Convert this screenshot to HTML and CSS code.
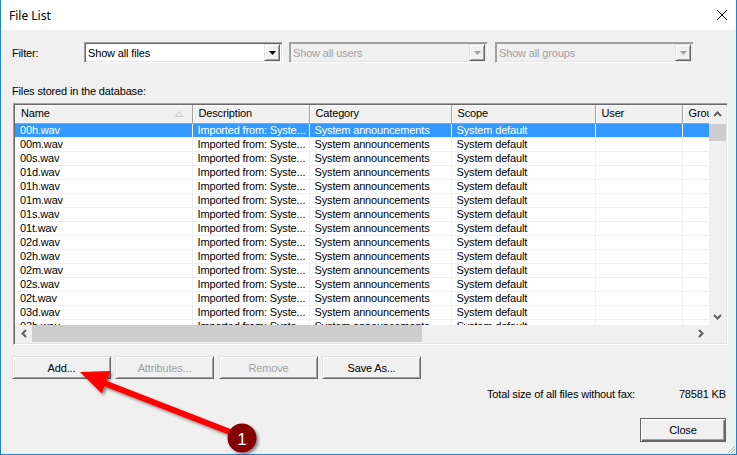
FILE: index.html
```html
<!DOCTYPE html>
<html lang="en">
<head>
    <meta charset="UTF-8">
    <title>File List</title>
    <link rel="stylesheet" href="styles.css">
</head>
<body>
<div class="window">
    <div class="titlebar">
        <span class="title">File List</span>
        <svg class="close-x" width="12" height="12" viewBox="0 0 12 12">
            <path d="M1 1 L11 11 M11 1 L1 11" stroke="#000" stroke-width="1"/>
        </svg>
    </div>

    <div class="content">
        <div class="filter-row">
            <span class="filter-label">Filter:</span>
            <div class="combo">
                <span class="combo-text">Show all files</span>
                <span class="combo-btn"><svg width="7" height="4" viewBox="0 0 7 4"><path d="M0 0 H7 L3.5 4 Z" fill="#000"/></svg></span>
            </div>
            <div class="combo disabled">
                <span class="combo-text">Show all users</span>
                <span class="combo-btn"><svg width="7" height="4" viewBox="0 0 7 4"><path d="M0 0 H7 L3.5 4 Z" fill="#a0a0a0"/></svg></span>
            </div>
            <div class="combo disabled">
                <span class="combo-text">Show all groups</span>
                <span class="combo-btn"><svg width="7" height="4" viewBox="0 0 7 4"><path d="M0 0 H7 L3.5 4 Z" fill="#a0a0a0"/></svg></span>
            </div>
        </div>

        <div class="caption">Files stored in the database:</div>

        <div class="listview">
            <div class="list-main">
                <div class="list-area">
                    <table class="files">
                        <colgroup>
                            <col style="width:177px"><col style="width:117px"><col style="width:142px">
                            <col style="width:144px"><col style="width:87px"><col style="width:27px">
                        </colgroup>
                        <thead>
                            <tr>
                                <th>Name<svg class="sort" width="8" height="6" viewBox="0 0 8 6"><path d="M0.5 5.5 L4 0.5 L7.5 5.5 Z" fill="none" stroke="#c8c8c8"/></svg></th>
                                <th>Description</th>
                                <th>Category</th>
                                <th>Scope</th>
                                <th>User</th>
                                <th>Group</th>
                            </tr>
                        </thead>
                        <tbody>
                            <tr class="selected"><td>00h.wav</td><td>Imported from: Syste...</td><td>System announcements</td><td>System default</td><td></td><td></td></tr>
                            <tr><td>00m.wav</td><td>Imported from: Syste...</td><td>System announcements</td><td>System default</td><td></td><td></td></tr>
                            <tr><td>00s.wav</td><td>Imported from: Syste...</td><td>System announcements</td><td>System default</td><td></td><td></td></tr>
                            <tr><td>01d.wav</td><td>Imported from: Syste...</td><td>System announcements</td><td>System default</td><td></td><td></td></tr>
                            <tr><td>01h.wav</td><td>Imported from: Syste...</td><td>System announcements</td><td>System default</td><td></td><td></td></tr>
                            <tr><td>01m.wav</td><td>Imported from: Syste...</td><td>System announcements</td><td>System default</td><td></td><td></td></tr>
                            <tr><td>01s.wav</td><td>Imported from: Syste...</td><td>System announcements</td><td>System default</td><td></td><td></td></tr>
                            <tr><td>01t.wav</td><td>Imported from: Syste...</td><td>System announcements</td><td>System default</td><td></td><td></td></tr>
                            <tr><td>02d.wav</td><td>Imported from: Syste...</td><td>System announcements</td><td>System default</td><td></td><td></td></tr>
                            <tr><td>02h.wav</td><td>Imported from: Syste...</td><td>System announcements</td><td>System default</td><td></td><td></td></tr>
                            <tr><td>02m.wav</td><td>Imported from: Syste...</td><td>System announcements</td><td>System default</td><td></td><td></td></tr>
                            <tr><td>02s.wav</td><td>Imported from: Syste...</td><td>System announcements</td><td>System default</td><td></td><td></td></tr>
                            <tr><td>02t.wav</td><td>Imported from: Syste...</td><td>System announcements</td><td>System default</td><td></td><td></td></tr>
                            <tr><td>03d.wav</td><td>Imported from: Syste...</td><td>System announcements</td><td>System default</td><td></td><td></td></tr>
                            <tr><td>03h.wav</td><td>Imported from: Syste...</td><td>System announcements</td><td>System default</td><td></td><td></td></tr>
                        </tbody>
                    </table>
                </div>
                <div class="vscroll">
                    <span class="sb-arrow"><svg width="9" height="6" viewBox="0 0 9 6"><path d="M1 5 L4.5 1.5 L8 5" fill="none" stroke="#606060" stroke-width="2"/></svg></span>
                    <span class="vthumb"></span>
                    <span class="sb-fill"></span>
                    <span class="sb-arrow"><svg width="9" height="6" viewBox="0 0 9 6"><path d="M1 1 L4.5 4.5 L8 1" fill="none" stroke="#606060" stroke-width="2"/></svg></span>
                </div>
            </div>
            <div class="hscroll-row">
                <div class="hscroll">
                    <span class="sb-arrow"><svg width="6" height="9" viewBox="0 0 6 9"><path d="M5 1 L1.5 4.5 L5 8" fill="none" stroke="#606060" stroke-width="2"/></svg></span>
                    <span class="hthumb"></span>
                    <span class="sb-fill"></span>
                    <span class="sb-arrow"><svg width="6" height="9" viewBox="0 0 6 9"><path d="M1 1 L4.5 4.5 L1 8" fill="none" stroke="#606060" stroke-width="2"/></svg></span>
                </div>
                <div class="corner"></div>
            </div>
        </div>

        <div class="button-row">
            <button class="btn">Add...</button>
            <button class="btn" disabled>Attributes...</button>
            <button class="btn" disabled>Remove</button>
            <button class="btn">Save As...</button>
        </div>

        <div class="total-row">
            <span>Total size of all files without fax:</span>
            <span class="total-value">78581 KB</span>
        </div>

        <div class="close-row">
            <button class="btn btn-default">Close</button>
        </div>
    </div>

    <svg class="grip" width="9" height="9" viewBox="0 0 9 9">
        <path d="M8 1 L1 8 M8 4 L4 8 M8 7 L7 8" stroke="#b0b0b0" stroke-width="1"/>
    </svg>

    <!-- Markierung: Pfeil auf "Add..." -->
    <svg class="annotation" width="737" height="455" viewBox="0 0 737 455">
        <defs>
            <filter id="shadow" x="-20%" y="-20%" width="140%" height="140%">
                <feDropShadow dx="2" dy="2" stdDeviation="1.5" flood-color="#000" flood-opacity="0.45"/>
            </filter>
        </defs>
        <g filter="url(#shadow)">
            <line x1="230" y1="432" x2="104" y2="383" stroke="#ff0000" stroke-width="6"/>
            <polygon points="80,372 110.5,371 101.7,393.4" fill="#ff0000"/>
        </g>
        <circle cx="242" cy="438" r="14.5" fill="#850000" filter="url(#shadow)"/>
        <text x="242" y="444.5" class="badge-num" text-anchor="middle">1</text>
    </svg>
</div>
</body>
</html>
```

FILE: styles.css
```css
* {
    box-sizing: border-box;
}

body {
    margin: 0;
    font-family: "Liberation Sans", Arial, sans-serif;
    font-size: 11px;
    letter-spacing: -0.15px;
    color: #000;
    background: #fff;
}

.window {
    position: relative;
    width: 737px;
    height: 455px;
    border: 1px solid #1883d7;
    border-top: none;
    background: #f0f0f0;
    display: flex;
    flex-direction: column;
}

.titlebar {
    height: 30px;
    flex: none;
    background: #fff;
    display: flex;
    align-items: center;
    justify-content: space-between;
    padding: 0 8px 0 8px;
    font-family: "Noto Sans", sans-serif;
    font-size: 12px;
    letter-spacing: 0;
}

.title {
    margin-top: 1px;
}

.content {
    flex: 1;
    padding: 12px 10px 0 11px;
}

/* Filterzeile */
.filter-row {
    display: flex;
    align-items: center;
    height: 21px;
}

.filter-label {
    width: 72px;
}

.combo {
    width: 199px;
    height: 21px;
    margin-right: 6px;
    display: flex;
    align-items: center;
    background: #fff;
    border: 1px solid;
    border-color: #a0a0a0 #fff #fff #a0a0a0;
    box-shadow: inset 1px 1px 0 #696969, inset -1px -1px 0 #e3e3e3;
    padding: 2px 2px 2px 3px;
}

.combo.disabled {
    background: #f0f0f0;
    color: #a0a0a0;
    box-shadow: inset 1px 1px 0 #a0a0a0, inset -1px -1px 0 #e3e3e3;
}

.combo + .combo.disabled + .combo.disabled {
    margin-left: 1px;
}

.combo-text {
    flex: 1;
}

.combo-btn {
    width: 16px;
    height: 17px;
    display: flex;
    align-items: center;
    justify-content: center;
    background: #f0f0f0;
    border: 1px solid;
    border-color: #e3e3e3 #696969 #696969 #e3e3e3;
    box-shadow: inset 1px 1px 0 #fff, inset -1px -1px 0 #a0a0a0;
}

.caption {
    margin-top: 22px;
    height: 13px;
    line-height: 13px;
    margin-bottom: 5px;
}

/* Liste */
.listview {
    width: 715px;
    height: 242px;
    margin-left: 1px;
    border: 1px solid;
    border-color: #a0a0a0 #fff #fff #a0a0a0;
    box-shadow: inset 1px 1px 0 #696969, inset -1px -1px 0 #e3e3e3;
    padding: 1px;
    display: flex;
    flex-direction: column;
}

.list-main {
    display: flex;
    height: 220px;
}

.list-area {
    width: 694px;
    overflow: hidden;
    background: #fff;
}

.files {
    table-layout: fixed;
    border-collapse: collapse;
    width: 694px;
}

.files th {
    height: 18px;
    padding: 0 0 1px 6px;
    font-weight: normal;
    text-align: left;
    white-space: nowrap;
    overflow: hidden;
    background: #f0f0f0;
    border-right: 1px solid #a0a0a0;
    border-bottom: 1px solid #a0a0a0;
    box-shadow: inset 1px 1px 0 #fff;
    position: relative;
}

.sort {
    position: absolute;
    right: 9px;
    top: 6px;
}

.files td {
    height: 14px;
    line-height: 13px;
    padding: 0 0 0 5px;
    white-space: nowrap;
    overflow: hidden;
    border-right: 1px solid #f0f0f0;
    border-bottom: 1px solid #f0f0f0;
}

.files td + td {
    padding-left: 5px;
}

.files tr.selected td {
    background: #3399ff;
    color: #fff;
    border-right-color: #fff;
}

.vscroll {
    width: 17px;
    display: flex;
    flex-direction: column;
    background: #f0f0f0;
}

.sb-arrow {
    width: 17px;
    height: 17px;
    display: flex;
    align-items: center;
    justify-content: center;
    flex: none;
}

.vthumb {
    height: 17px;
    margin: 2px 0 0 0;
    background: #cdcdcd;
}

.sb-fill {
    flex: 1;
}

.hscroll-row {
    display: flex;
    height: 17px;
}

.hscroll {
    width: 694px;
    display: flex;
    background: #f0f0f0;
}

.hthumb {
    width: 390px;
    background: #cdcdcd;
}

.corner {
    width: 17px;
    background: #f0f0f0;
}

/* Knöpfe */
.button-row {
    display: flex;
    gap: 4px;
    margin-top: 11px;
}

.btn {
    width: 99px;
    height: 23px;
    padding: 0;
    font-family: "Liberation Sans", Arial, sans-serif;
    font-size: 11px;
    letter-spacing: -0.15px;
    color: #000;
    background: #f0f0f0;
    border: 1px solid;
    border-color: #e3e3e3 #696969 #696969 #e3e3e3;
    box-shadow: inset 1px 1px 0 #fff, inset -1px -1px 0 #a0a0a0;
}

.btn:disabled {
    color: #a0a0a0;
}

.btn + .btn:disabled + .btn:disabled {
    margin-left: 1px;
}

.total-row {
    display: flex;
    justify-content: flex-end;
    margin-top: 9px;
    height: 13px;
    line-height: 13px;
}

.total-value {
    width: 91px;
    text-align: right;
}

.close-row {
    display: flex;
    justify-content: flex-end;
    margin-top: 17px;
}

.btn-default {
    width: 86px;
    height: 24px;
    border: 1px solid #646464;
    box-shadow: inset 1px 1px 0 #fff, inset -1px -1px 0 #696969, inset -2px -2px 0 #a0a0a0;
}

.grip {
    position: absolute;
    right: 0;
    bottom: 0;
}

.annotation {
    position: absolute;
    left: -1px;
    top: 0;
    pointer-events: none;
}

.badge-num {
    fill: #fff;
    font-family: "Liberation Sans", Arial, sans-serif;
    font-size: 17px;
    letter-spacing: 0;
}
```
